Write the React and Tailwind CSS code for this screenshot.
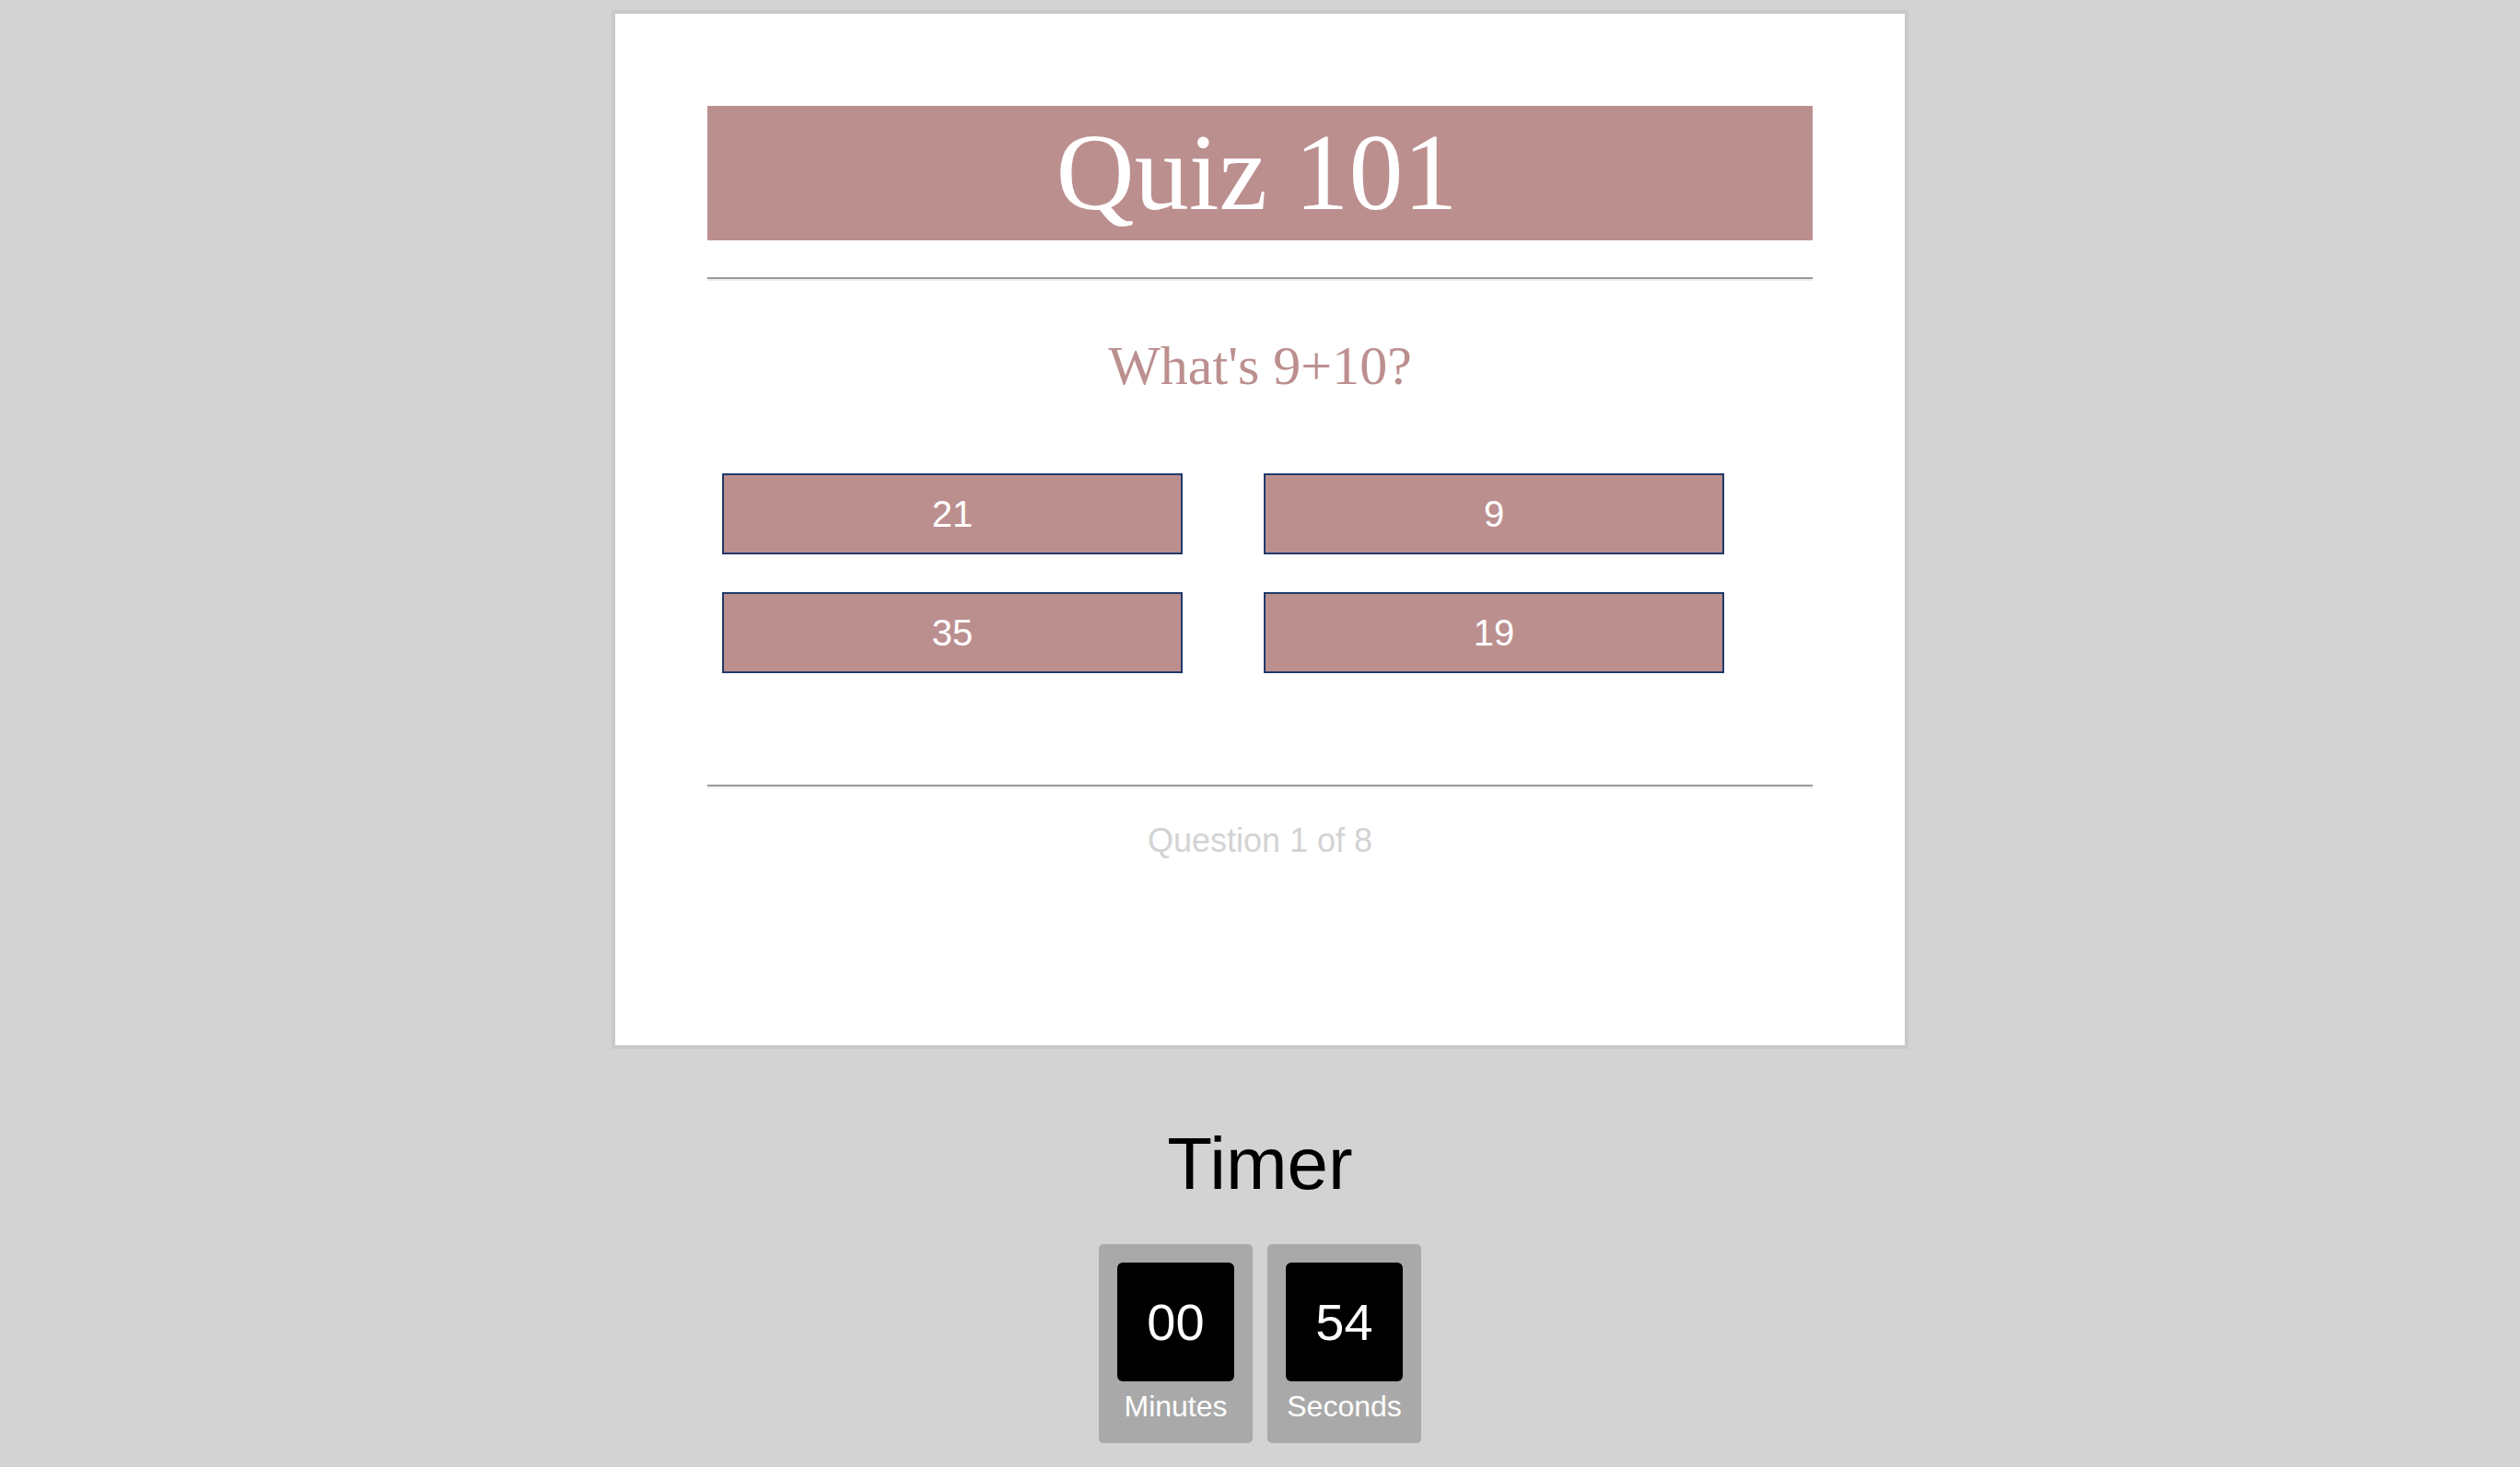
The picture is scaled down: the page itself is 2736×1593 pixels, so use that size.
import React from "react";

const sans = "font-['Liberation_Sans',Arial,sans-serif]";

function Hr({ className = "" }) {
  return (
    <div
      className={`h-0 border-t-2 border-b-2 border-t-[#999999] border-b-[#eeeeee] ${className}`}
    />
  );
}

function Answer({ label }) {
  return (
    <button
      className={`h-[88px] w-[500px] border-2 border-[#1f3a6b] bg-[#bc8f8f] text-white text-[40px] leading-[46px] ${sans} flex items-center justify-center`}
    >
      {label}
    </button>
  );
}

function TimeBox({ value, label }) {
  return (
    <div className="w-[167px] h-[216px] bg-[#a9a9a9] rounded-[5px] pt-[20px] px-[20px] flex flex-col items-center">
      <div className="w-[127px] h-[129px] bg-black rounded-[6px] flex items-center justify-center text-white text-[56px]">
        {value}
      </div>
      <div className="mt-[9px] text-white text-[32px] leading-[36px] whitespace-nowrap">
        {label}
      </div>
    </div>
  );
}

export default function App() {
  return (
    <div
      className={`min-h-[1593px] bg-[#d3d3d3] flex flex-col items-center pt-[11px] ${sans}`}
    >
      <div className="box-border w-[1408px] h-[1128px] bg-white border-4 border-[#c9c9c9] px-[100px] pt-[100px]">
        <div className="h-[146px] pr-[7px] bg-[#bc8f8f] text-white text-center font-['Liberation_Serif','Times_New_Roman',serif] text-[118px] leading-[146px]">
          Quiz 101
        </div>
        <Hr className="mt-[40px]" />
        <h2 className="mt-[58px] text-center font-['Liberation_Serif','Times_New_Roman',serif] text-[60px] leading-[69px] text-[#bc8f8f]">
          What's 9+10?
        </h2>
        <div className="mt-[82px] pl-[16px] grid grid-cols-[500px_500px] gap-x-[88px] gap-y-[41px]">
          <Answer label="21" />
          <Answer label="9" />
          <Answer label="35" />
          <Answer label="19" />
        </div>
        <Hr className="mt-[121px]" />
        <p className="mt-[36px] text-center text-[36px] leading-[41px] text-[#d3d3d3]">
          Question 1 of 8
        </p>
      </div>

      <div className="mt-[79px] text-black text-[80px] leading-[92px]">Timer</div>
      <div className="mt-[41px] flex gap-[16px]">
        <TimeBox value="00" label="Minutes" />
        <TimeBox value="54" label="Seconds" />
      </div>
    </div>
  );
}
